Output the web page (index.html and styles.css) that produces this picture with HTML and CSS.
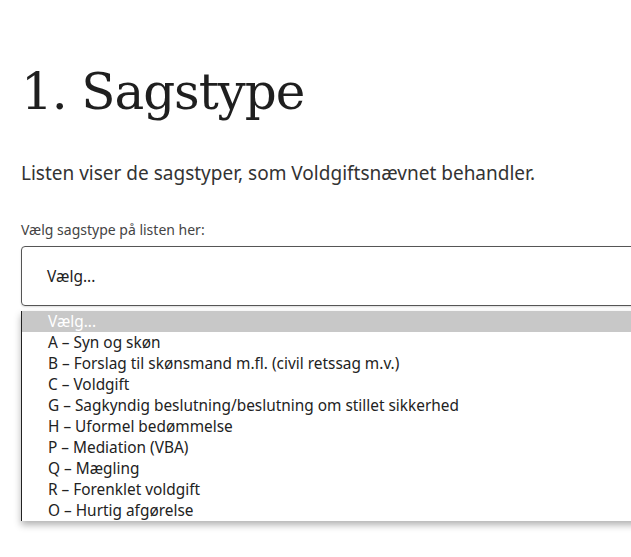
FILE: index.html
```html
<!DOCTYPE html>
<html lang="da">
<head>
<meta charset="utf-8">
<link rel="stylesheet" href="styles.css">
</head>
<body>
<main class="page">
  <h1 class="title">1. Sagstype</h1>
  <p class="lead">Listen viser de sagstyper, som Voldgiftsnævnet behandler.</p>
  <label class="label">Vælg sagstype på listen her:</label>
  <div class="select">Vælg...</div>
  <ul class="options">
    <li class="opt opt-selected">Vælg...</li>
    <li class="opt">A – Syn og skøn</li>
    <li class="opt">B – Forslag til skønsmand m.fl. (civil retssag m.v.)</li>
    <li class="opt">C – Voldgift</li>
    <li class="opt">G – Sagkyndig beslutning/beslutning om stillet sikkerhed</li>
    <li class="opt">H – Uformel bedømmelse</li>
    <li class="opt">P – Mediation (VBA)</li>
    <li class="opt">Q – Mægling</li>
    <li class="opt">R – Forenklet voldgift</li>
    <li class="opt">O – Hurtig afgørelse</li>
  </ul>
</main>
</body>
</html>
```
FILE: styles.css
```css
html, body {
  margin: 0;
  padding: 0;
  background: #fff;
  overflow: hidden;
}
.page {
  padding: 57px 0 30px 21px;
  width: 720px;
  font-family: "Noto Sans", sans-serif;
  color: #222;
}
.title {
  margin: 0;
  font-family: "DejaVu Serif", serif;
  font-weight: 400;
  font-size: 50px;
  line-height: 70px;
  letter-spacing: -1.1px;
  color: #1f1f1f;
}
.lead {
  margin: 32px 0 0;
  font-size: 19px;
  line-height: 28px;
  color: #333;
}
.label {
  display: block;
  margin-top: 34px;
  font-size: 14px;
  line-height: 18px;
  color: #444;
}
.select {
  margin-top: 7px;
  height: 58px;
  border: 1px solid #555;
  border-radius: 4px;
  box-sizing: content-box;
  padding-left: 25px;
  display: flex;
  align-items: center;
  font-size: 15.5px;
  color: #222;
  box-shadow: 0 1px 2px rgba(0,0,0,0.15);
}
.options {
  list-style: none;
  margin: 5px 0 0;
  padding: 0;
  border-left: 1px solid #222;
  box-shadow: 0 4px 7px rgba(0,0,0,0.3);
  background: #fff;
}
.opt {
  height: 21px;
  line-height: 21px;
  padding-left: 26px;
  font-size: 15.4px;
  color: #222;
  white-space: nowrap;
}
.opt-selected {
  background: #c8c8c8;
  color: #fff;
}
```
